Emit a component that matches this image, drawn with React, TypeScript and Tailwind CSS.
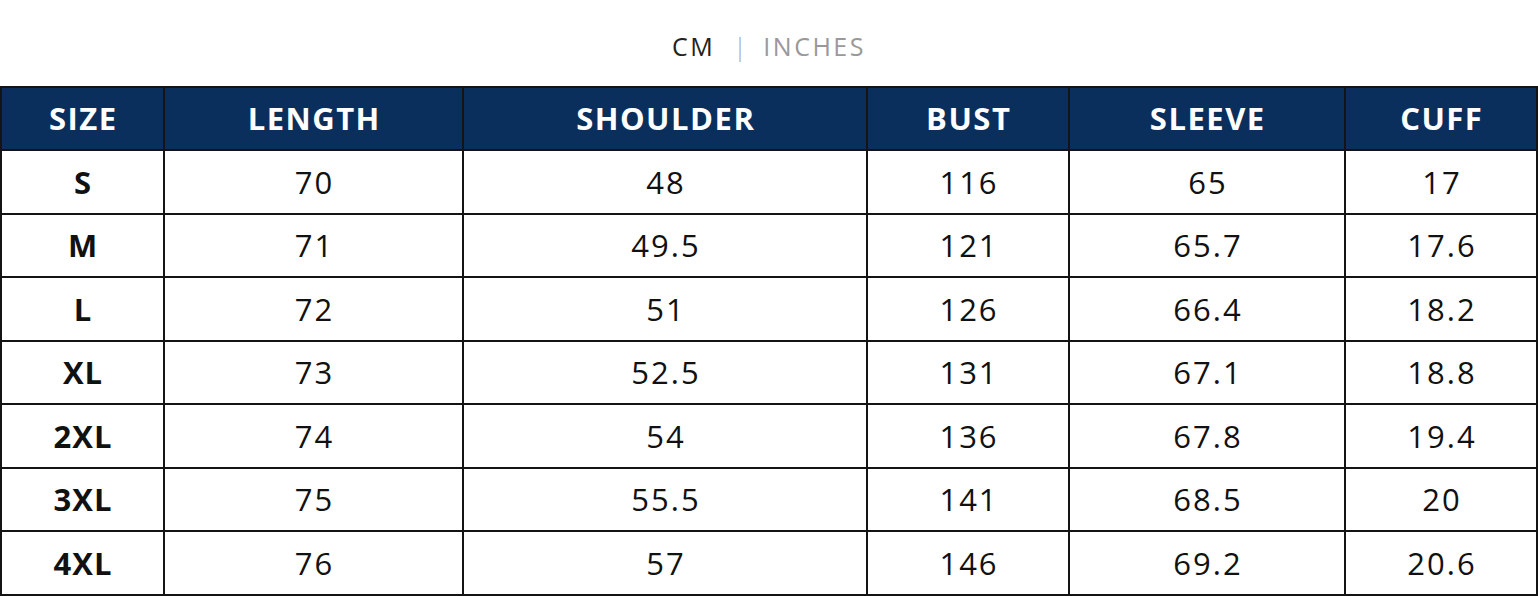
import React from "react";

const cols = ["SIZE", "LENGTH", "SHOULDER", "BUST", "SLEEVE", "CUFF"];
const rows = [
  ["S", "70", "48", "116", "65", "17"],
  ["M", "71", "49.5", "121", "65.7", "17.6"],
  ["L", "72", "51", "126", "66.4", "18.2"],
  ["XL", "73", "52.5", "131", "67.1", "18.8"],
  ["2XL", "74", "54", "136", "67.8", "19.4"],
  ["3XL", "75", "55.5", "141", "68.5", "20"],
  ["4XL", "76", "57", "146", "69.2", "20.6"],
];

export default function App() {
  return (
    <div className="w-[1538px] h-[596px] overflow-hidden bg-white" style={{ fontFamily: '"Open Sans", "Noto Sans", sans-serif' }}>
      <div className="h-[86px] flex items-center justify-center text-[25px] tracking-[2.5px] pt-[8px]">
        <span className="text-[#222]">CM</span>
        <span className="text-[#aaa] ml-[18px] mr-[14px] font-light">|</span>
        <span className="text-[#999]">INCHES</span>
      </div>
      <div className="grid grid-cols-[163px_299px_404px_202px_276px_1fr] border-t-2 border-l-2 border-[#141414]">
        {cols.map((c) => (
          <div
            key={c}
            className="h-[63px] bg-[#0b2f5c] text-white font-bold text-[31px] flex items-center justify-center border-r-2 border-b-2 border-[#141414] tracking-[1.5px] pl-[1.5px]"
          >
            {c}
          </div>
        ))}
        {rows.map((r) =>
          r.map((v, i) => (
            <div
              key={r[0] + i}
              className={
                "h-[63.5px] flex items-center justify-center border-r-2 border-b-2 border-[#141414] text-[#111] text-[31px] " +
                (i === 0 ? "font-bold tracking-[1px] pl-[1px]" : "font-normal tracking-[2px] pl-[2px]")
              }
            >
              {v}
            </div>
          ))
        )}
      </div>
    </div>
  );
}
